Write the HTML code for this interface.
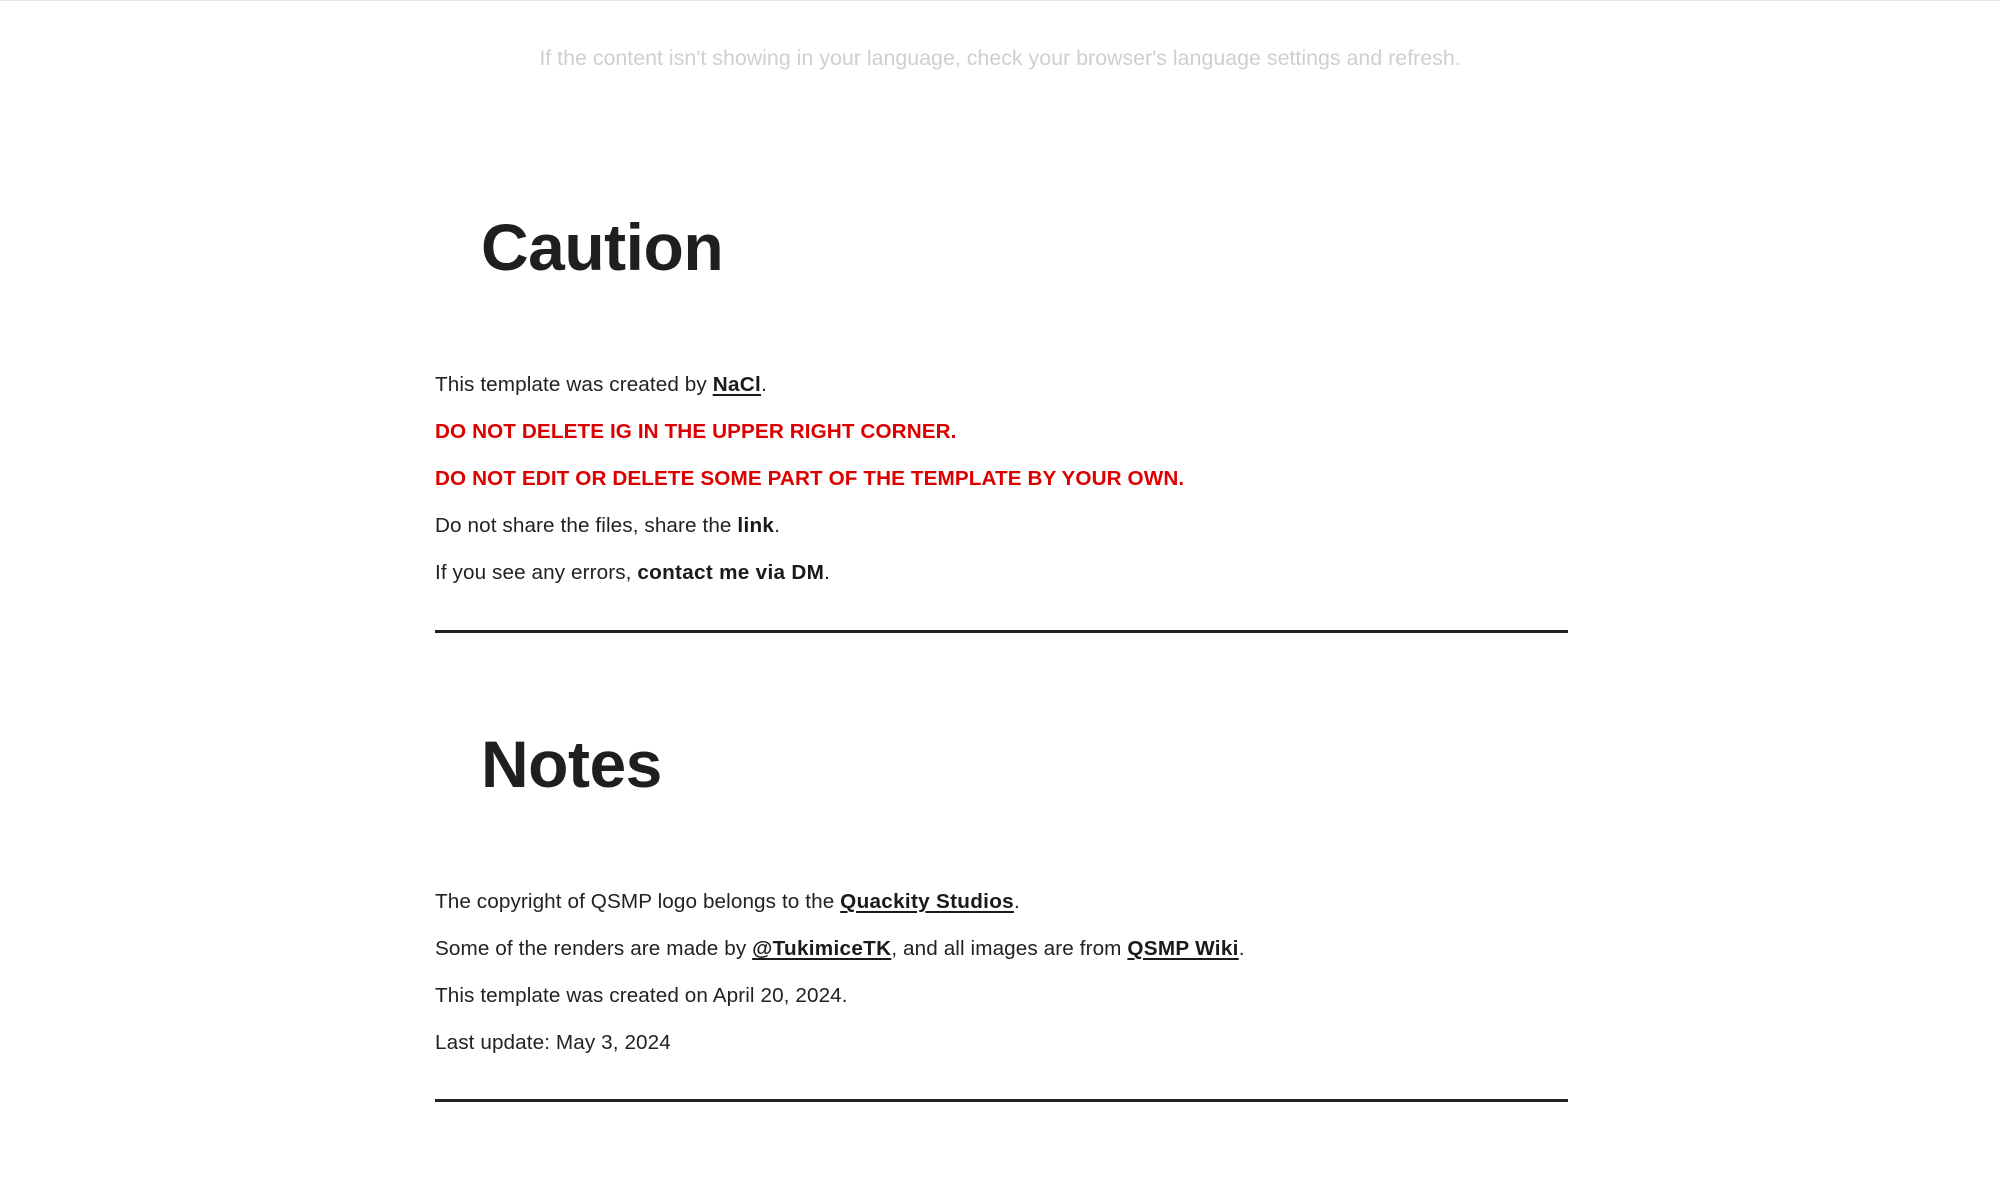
<!DOCTYPE html>
<html><head><meta charset="utf-8"><style>
html,body{margin:0;padding:0;background:#fff;width:2000px;height:1200px;overflow:hidden;position:relative;font-family:"Liberation Sans",sans-serif;color:#222;}
.top{position:absolute;left:0;top:0;width:2000px;height:1px;background:#e8e4ea;}
.note{position:absolute;left:0;width:2000px;top:46px;text-align:center;font-size:21.4px;color:#cfcfcf;}
h1{position:absolute;margin:0;left:481px;font-size:66px;font-weight:bold;color:#1f1f1f;line-height:1;letter-spacing:-0.5px;}
.p{position:absolute;left:435px;font-size:20.7px;letter-spacing:0.1px;line-height:24px;color:#222;white-space:nowrap;}
.p b{font-weight:bold;color:#1a1a1a;letter-spacing:0.3px;}
.p a{font-weight:bold;color:#1a1a1a;letter-spacing:0.3px;text-decoration:underline;text-decoration-thickness:2px;text-underline-offset:3px;}
.red{color:#dc0000;font-weight:bold;}
.hr{position:absolute;left:435px;width:1133px;height:3px;background:#222;}
</style></head><body>
<div class="top"></div>
<div class="note">If the content isn't showing in your language, check your browser's language settings and refresh.</div>
<h1 style="top:214px">Caution</h1>
<div class="p" style="top:373px">This template was created by <a>NaCl</a>.</div>
<div class="p red" style="top:420px">DO NOT DELETE IG IN THE UPPER RIGHT CORNER.</div>
<div class="p red" style="top:467px">DO NOT EDIT OR DELETE SOME PART OF THE TEMPLATE BY YOUR OWN.</div>
<div class="p" style="top:514px">Do not share the files, share the <b>link</b>.</div>
<div class="p" style="top:561px">If you see any errors, <b>contact me via DM</b>.</div>
<div class="hr" style="top:630px"></div>
<h1 style="top:731px">Notes</h1>
<div class="p" style="top:890px">The copyright of QSMP logo belongs to the <a>Quackity Studios</a>.</div>
<div class="p" style="top:937px">Some of the renders are made by <a>@TukimiceTK</a>, and all images are from <a>QSMP Wiki</a>.</div>
<div class="p" style="top:984px">This template was created on April 20, 2024.</div>
<div class="p" style="top:1031px">Last update: May 3, 2024</div>
<div class="hr" style="top:1099px"></div>
</body></html>
